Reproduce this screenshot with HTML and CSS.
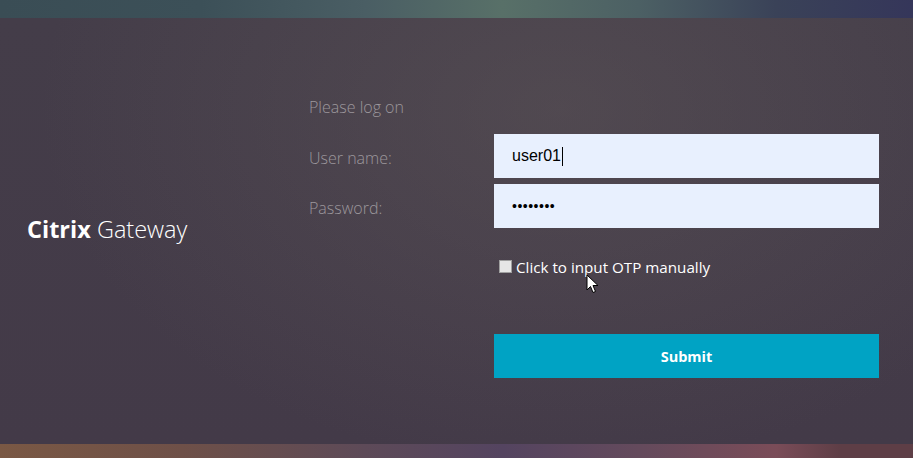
FILE: index.html
```html
<!DOCTYPE html>
<html lang="en">
<head>
    <meta charset="UTF-8">
    <meta name="viewport" content="width=device-width, initial-scale=1.0">
    <title>Citrix Gateway</title>
    <link rel="stylesheet" href="styles.css">
</head>
<body>

    <!-- Top decorative strip -->
    <div class="strip strip-top"></div>

    <!-- Main logon panel -->
    <div class="main">
        <div class="brand">
            <span class="brand-bold">Citrix</span> Gateway
        </div>

        <div class="logon">
            <div class="heading">Please log on</div>

            <div class="row">
                <label class="label">User name:</label>
                <div class="field">user01<span class="caret"></span></div>
            </div>
            <div class="row">
                <label class="label">Password:</label>
                <div class="field field-pass">&bull;&bull;&bull;&bull;&bull;&bull;&bull;&bull;</div>
            </div>

            <div class="row row-check">
                <div></div>
                <label class="check">
                    <span class="box"></span>
                    <span>Click to input OTP manually</span>
                    <svg class="pointer" width="13" height="20" viewBox="0 0 13 20">
                        <path d="M1 1 L1 16 L4.5 12.5 L7 18.5 L9.5 17.5 L7 11.5 L12 11.5 Z" fill="#fff" stroke="#000" stroke-width="1"/>
                    </svg>
                </label>
            </div>

            <div class="row row-submit">
                <div></div>
                <button class="submit">Submit</button>
            </div>
        </div>
    </div>

    <!-- Bottom decorative strip -->
    <div class="strip strip-bottom"></div>

</body>
</html>
```

FILE: styles.css
```css
body {
    margin: 0;
    padding: 0;
    font-family: "Open Sans", "Noto Sans", sans-serif;
    background: #433c47;
    overflow: hidden;
}
.strip {
    height: 18px;
}
.strip-top {
    background: linear-gradient(to right, #3a4d55 0%, #3c5058 22%, #4a5e64 40%, #587068 55%, #4c6064 70%, #3a4258 85%, #35365a 100%);
}
.strip-bottom {
    height: 14px;
    background: linear-gradient(to right, #7a5844 0%, #6e5048 20%, #5d4a58 40%, #544460 55%, #644a5c 70%, #7a4c58 85%, #5e3e46 92%, #5e3e46 100%);
}
.main {
    height: 426px;
    display: flex;
    background:
        radial-gradient(ellipse 520px 360px at 560px 90px, rgba(100, 92, 92, 0.4), rgba(100, 92, 92, 0) 100%),
        linear-gradient(to bottom, #443d49, #433a48);
}
.brand {
    width: 282px;
    padding-left: 27px;
    box-sizing: border-box;
    align-self: center;
    color: #fff;
    font-size: 23.5px;
    font-weight: 300;
    margin-top: -4px;
}
.brand-bold {
    font-weight: 700;
}
.logon {
    padding-top: 78px;
    padding-left: 27px;
}
.heading {
    color: #9c979c;
    font-size: 16px;
    font-weight: 300;
    line-height: 22px;
    margin-bottom: 16px;
}
.row {
    display: grid;
    grid-template-columns: 185px 385px;
    align-items: center;
    margin-bottom: 6px;
}
.label {
    color: #9c979c;
    font-size: 16px;
    font-weight: 300;
    padding-top: 3px;
}
.field {
    height: 44px;
    background: #e8f0fe;
    padding-left: 18px;
    display: flex;
    align-items: center;
    font-family: "Liberation Sans", Arial, sans-serif;
    font-size: 16px;
    color: #000;
}
.field-pass {
    font-size: 14px;
    letter-spacing: 0.5px;
}
.caret {
    display: inline-block;
    width: 1px;
    height: 19px;
    background: #000;
    margin-left: 1px;
}
.row-check {
    margin-top: 28px;
}
.check {
    position: relative;
    display: flex;
    align-items: center;
    color: #fff;
    font-size: 15.2px;
    line-height: 22px;
    padding-left: 5px;
}
.box {
    width: 11px;
    height: 11px;
    background: #e6e6e6;
    border: 1px solid #a0a0a0;
    margin-right: 4px;
    margin-top: -2px;
}
.pointer {
    position: absolute;
    left: 92px;
    top: 18px;
}
.row-submit {
    margin-top: 56px;
}
.submit {
    height: 44px;
    border: none;
    background: #00a3c4;
    color: #fff;
    font-family: "Open Sans", "Noto Sans", sans-serif;
    font-size: 14.5px;
    font-weight: 700;
}
```
